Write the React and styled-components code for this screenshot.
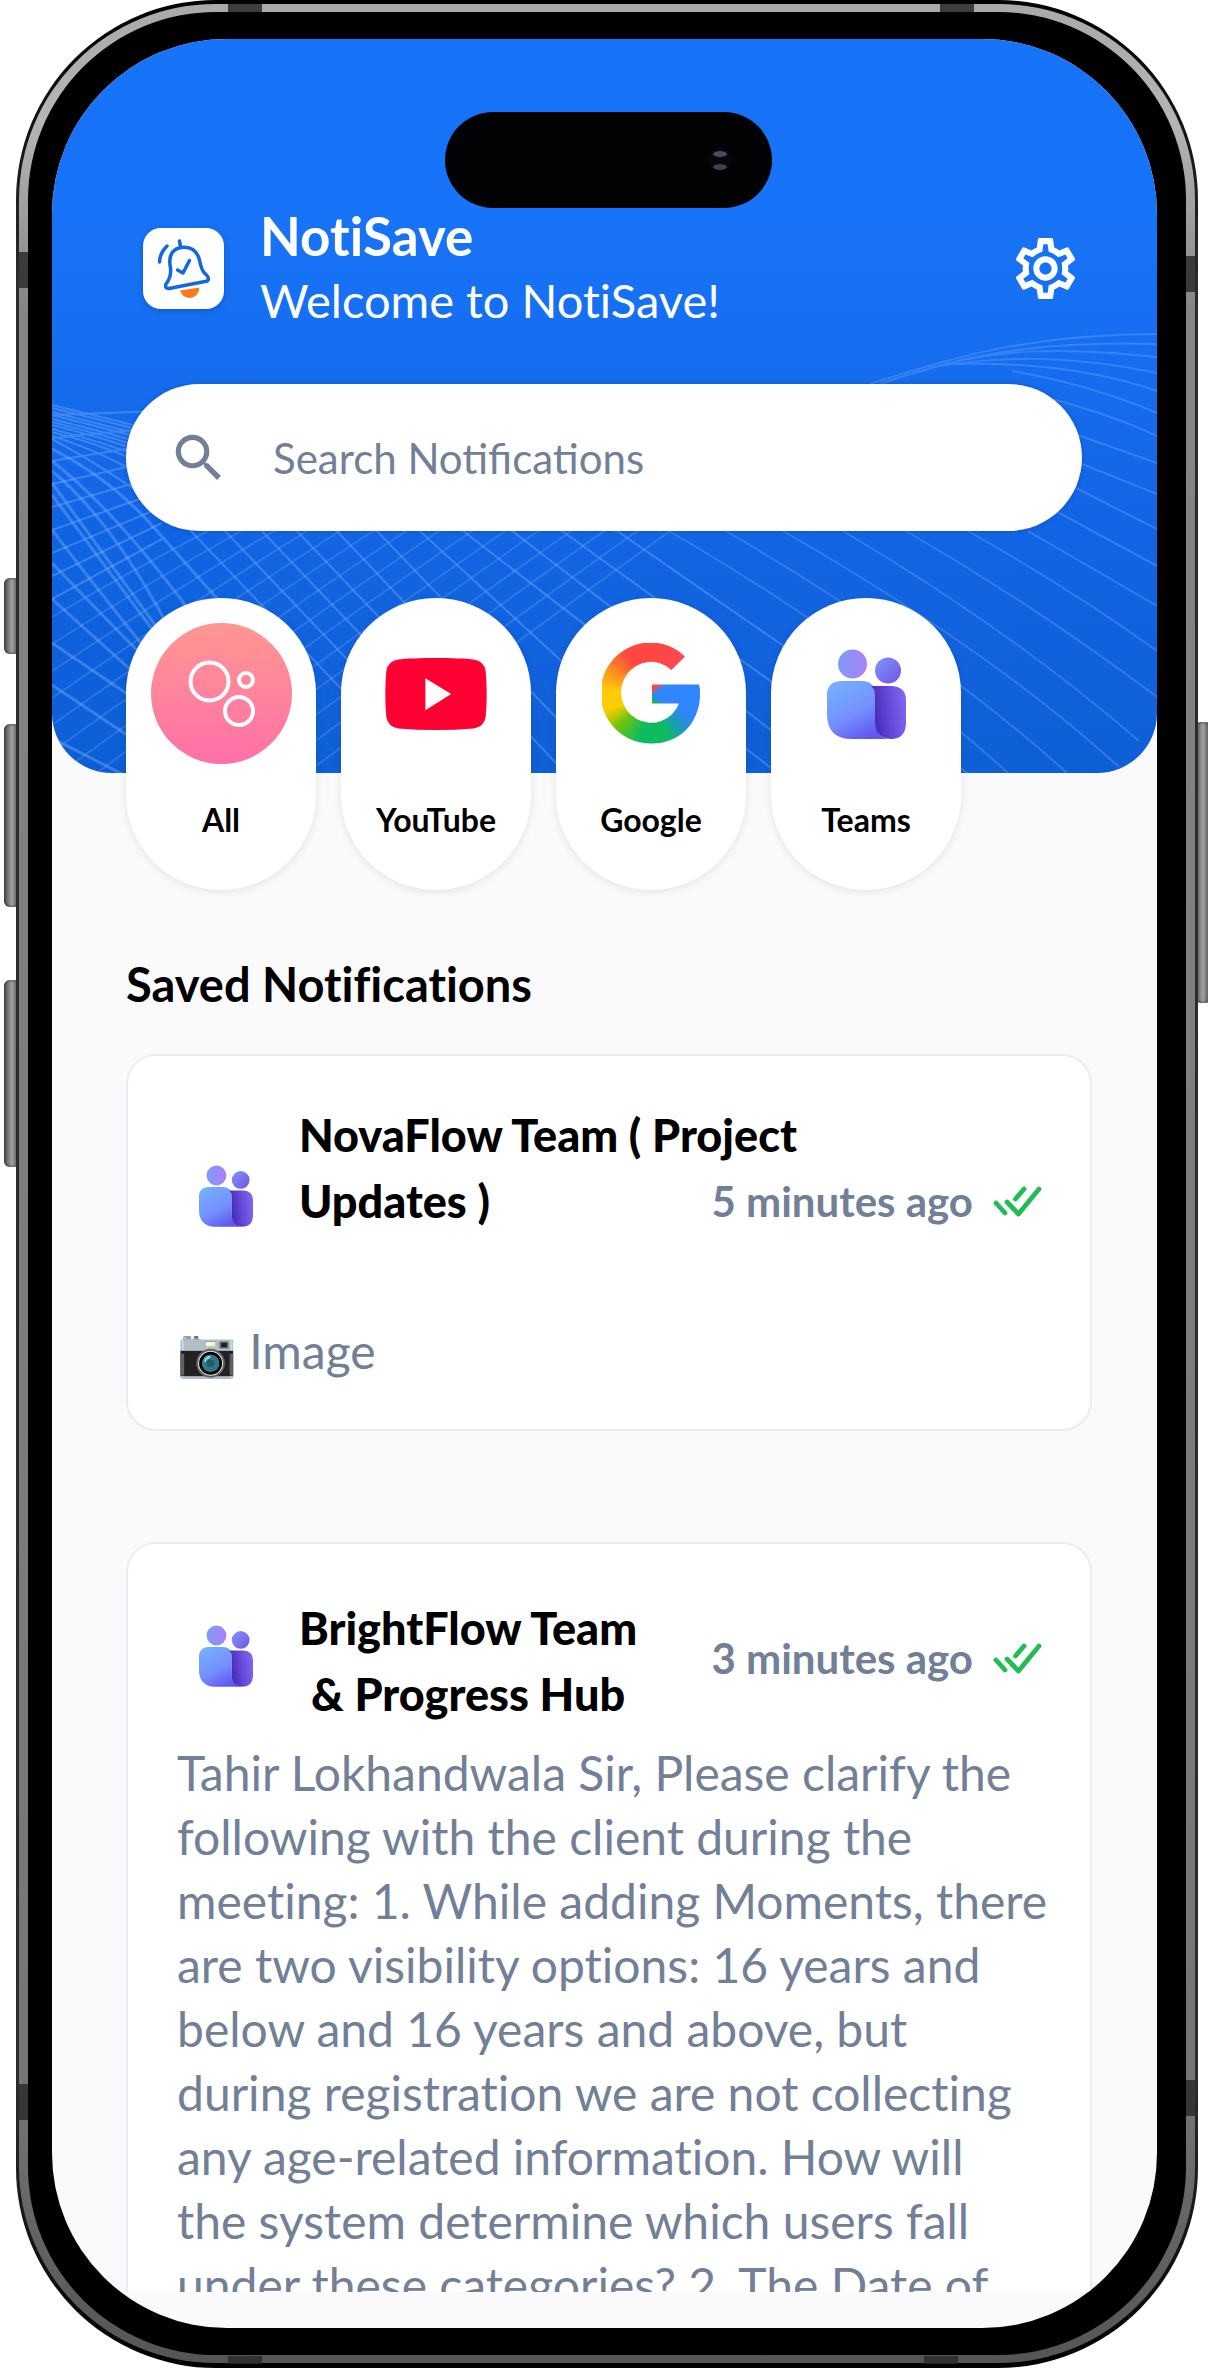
import styled, { createGlobalStyle } from 'styled-components';
import { MdOutlineSettings, MdSearch } from 'react-icons/md';

const GlobalStyle = createGlobalStyle`
    * {
        box-sizing: border-box;
    }
    body {
        margin: 0;
        background: white;
        font-family: Lato, 'Liberation Sans', sans-serif;
        font-variant-ligatures: none;
    }
    h1, h2, h3, p {
        margin: 0;
    }
`;

const Stage = styled.div`
    position: relative;
    height: 100vh;
    padding: 0 10px 0 16px;
`;

const SideButton = styled.span`
    position: absolute;
    top: ${({ $top }) => $top}px;
    height: ${({ $height }) => $height}px;
    width: 16px;
    ${({ $right }) => ($right ? 'right: -3px;' : 'left: 4px;')}
    border-radius: 6px;
    background: linear-gradient(90deg, #4a4a4a, #a2a2a2 50%, #3a3a3a);
    box-shadow: inset 0 0 3px #222;
`;

const Device = styled.div`
    position: relative;
    height: 100%;
    padding: 4px 3px 5px 3px;
    border-radius: 200px;
    background: linear-gradient(#000, #2c2c2c 12%, #2c2c2c 88%, #000);
`;

const Rim = styled.div`
    height: 100%;
    padding: 8px 9px;
    border-radius: 196px;
    background: linear-gradient(#a9a9a9, #b5b5b5 5%, #858585 13%, #757575 88%, #555);
`;

const Bezel = styled.div`
    height: 100%;
    padding: 27px 29px 27px 24px;
    border-radius: 188px;
    background: black;
`;

const Antenna = styled.span`
    position: absolute;
    background: #2b2b2b;
    opacity: 0.85;
    ${({ $side }) =>
        $side === 'top' || $side === 'bottom'
            ? `width: 34px; height: 8px; ${$side}: 4px;`
            : `width: 9px; height: 36px; ${$side}: 3px;`}
    ${({ $from, $at }) => `${$from}: ${$at}px;`}
`;

const Screen = styled.div`
    position: relative;
    display: flex;
    flex-direction: column;
    height: 100%;
    padding-bottom: 36px;
    border-radius: 175px;
    overflow: hidden;
    background: #fafafa;
`;

const Island = styled.div`
    position: absolute;
    top: 73px;
    left: 393px;
    right: 385px;
    display: flex;
    align-items: center;
    justify-content: flex-end;
    height: 96px;
    padding-right: 40px;
    border-radius: 48px;
    background: #020204;
`;

const HeaderBlock = styled.header`
    position: relative;
    flex-shrink: 0;
    padding: 165px 75px 242px 74px;
    border-radius: 0 0 60px 60px;
    overflow: hidden;
    background: linear-gradient(#1674f8, #1772f6 30%, #1264e2 70%, #0f5fd6);
`;

const WaveSvg = styled.svg`
    position: absolute;
    inset: 0;
    width: 100%;
    height: 100%;
`;

const TopBar = styled.div`
    position: relative;
    display: flex;
    align-items: center;
    gap: 36px;
    padding-left: 17px;
    margin-bottom: 52px;
    color: white;
`;

const LogoTile = styled.div`
    width: 81px;
    height: 81px;
    border-radius: 18px;
    background: white;
    box-shadow: 0 2px 6px rgba(0, 40, 120, 0.3);
`;

const Greeting = styled.div`
    flex: 1;
    line-height: 64px;
`;

const AppName = styled.h1`
    font-size: 53px;
    font-weight: 700;
`;

const Welcome = styled.p`
    font-size: 47px;
`;

const IconButton = styled.button`
    display: flex;
    padding: 0;
    border: 0;
    background: none;
    color: white;
    font-size: 73px;
`;

const SearchBar = styled.label`
    position: relative;
    display: flex;
    align-items: center;
    gap: 43px;
    height: 147px;
    padding: 0 42px;
    border-radius: 74px;
    background: white;
    color: #718096;
    font-size: 62px;
    box-shadow: 0 0 4px rgba(0, 30, 110, 0.3);
`;

const SearchInput = styled.input`
    flex: 1;
    min-width: 0;
    padding: 0;
    border: 0;
    outline: none;
    background: none;
    font-family: inherit;
    font-size: 42px;
    color: #718096;

    &::placeholder {
        color: #718096;
        opacity: 1;
    }
`;

const Filters = styled.nav`
    position: relative;
    display: flex;
    flex-shrink: 0;
    gap: 25px;
    margin-top: -175px;
    padding: 0 74px;
`;

const FilterPill = styled.button`
    display: flex;
    flex-direction: column;
    align-items: center;
    gap: 36px;
    width: 190px;
    height: 292px;
    padding: 25px 0 0;
    border: 0;
    border-radius: 95px;
    background: white;
    color: black;
    font-family: inherit;
    font-size: 32px;
    font-weight: 700;
    line-height: 40px;
    box-shadow: 0 2px 8px rgba(0, 0, 0, 0.09);
`;

const FilterIcon = styled.span`
    display: flex;
    align-items: center;
    justify-content: center;
    width: 141px;
    height: 141px;
    border-radius: 50%;
    background: ${({ $background }) => $background || 'none'};
`;

const GoogleMark = styled.span`
    width: 98px;
    height: 102px;
    background: conic-gradient(
        #ff4641 0deg,
        #ff4850 40deg,
        #3086ff 60deg,
        #3086ff 118deg,
        #1a9bb8 140deg,
        #0ebc5f 160deg,
        #0ebc5f 195deg,
        #6cc30f 225deg,
        #ffcc00 250deg,
        #ffcb0a 275deg,
        #ff8a20 303deg,
        #ff4641 330deg
    );
    clip-path: path(
        'M83 14 L69.5 27.5 A30 30.5 0 1 0 77 61 H50 V42 H97 C98 46 98.5 50 98 55 C96 82 77 101 50 101 A50 50.5 0 1 1 83 14 Z'
    );
`;

const Main = styled.main`
    flex: 1;
    min-height: 0;
    padding: 64px 65px 0 74px;
    overflow: hidden;
`;

const SectionTitle = styled.h2`
    margin-bottom: 40px;
    font-size: 47px;
    font-weight: 700;
    line-height: 60px;
`;

const Card = styled.article`
    margin-bottom: 111px;
    padding: 46px 24px 46px 49px;
    border: 2px solid #e9ecf2;
    border-radius: 30px;
    background: white;
`;

const CardHead = styled.div`
    display: grid;
    grid-template-columns: 98px 1fr auto;
    grid-template-rows: ${({ $stacked }) => ($stacked ? '66px 66px' : 'auto')};
    column-gap: 24px;
    align-items: center;
    padding-right: 24px;
    margin: ${({ $stacked }) => ($stacked ? '0 0 85px' : '5px 0 14px')};
`;

const CardIcon = styled.div`
    grid-column: 1;
    grid-row: ${({ $stacked }) => ($stacked ? 2 : 1)};
    display: flex;
    justify-content: center;
    padding-bottom: 10px;
`;

const CardTitle = styled.h3`
    grid-column: ${({ $stacked }) => ($stacked ? '2 / span 2' : '2')};
    grid-row: ${({ $stacked }) => ($stacked ? '1 / span 2' : '1')};
    display: flex;
    flex-direction: column;
    align-items: ${({ $stacked }) => ($stacked ? 'flex-start' : 'center')};
    justify-self: start;
    font-size: 45px;
    font-weight: 900;
    line-height: 66px;
`;

const CardTime = styled.div`
    grid-column: 3;
    grid-row: ${({ $stacked }) => ($stacked ? 2 : 1)};
    display: flex;
    align-items: center;
    gap: 20px;
    padding-bottom: ${({ $stacked }) => ($stacked ? 0 : 6)}px;
    color: #718096;
    font-size: 42px;
    font-weight: 700;
`;

const Message = styled.p`
    color: #718096;
    font-size: 48px;
    line-height: 64px;
    white-space: pre-line;
`;

// long lines that fall to the right, in the header's 1105 x 734 space
const sweeps = [
    [139, 1.05], [173, 1.05], [210, 1.05], [245, 1.05], [285, 1.06], [325, 1.04],
    [368, 0.92], [411, 0.77], [460, 0.77], [510, 0.72], [565, 0.69],
].map(([x, slope], i) => {
    const startY = Math.round(400 - i * 3.4);
    const midX = x / 2;
    const midY = Math.round(Math.max(492 - slope * midX * 0.75, startY + midX * 0.25));
    return `M0 ${startY} Q${midX} ${midY} ${x} 492 L${Math.round(x + 250 / slope)} 742`;
});

const rightSweeps = [
    'M818 345 C900 318 980 295 1105 295',
    'M828 345 C920 312 1000 302 1105 305',
    'M860 335 C940 308 1010 308 1105 318',
    'M880 328 C960 315 1030 318 1105 334',
    'M900 325 C970 323 1040 330 1105 352',
    'M960 332 Q1040 346 1105 374',
    'M1000 360 Q1060 376 1105 397',
    'M1020 394 L1105 424',
    'M1020 421 L1105 455',
    'M1010 442 L1105 490',
    'M1000 470 L1105 527',
    'M976 492 L1105 567',
    'M916 492 Q1020 551 1105 612',
    'M854 492 Q985 568 1105 658',
    'M791 492 Q960 592 1087 702',
    'M731 492 Q940 612 1067 728',
    'M674 492 Q880 612 1015 734',
    'M617 492 Q820 610 956 734',
];

const leftSweeps = [
    'M0 410 Q60 440 105 492 L170 565', 'M0 422 Q62 470 140 575', 'M0 432 Q58 480 112 580',
    'M0 444 L106 590', 'M0 456 L100 590', 'M0 491 Q50 556 92 608',
    'M0 524 Q50 576 90 616', 'M0 560 L80 632', 'M0 604 L90 665', 'M0 646 L90 706', 'M0 699 L74 737',
];

const risers = Array.from({ length: 15 }, (_, k) => {
    const x = 156 + k * 33;
    return `M0 ${578 + k * 27} Q${x / 2} ${532 + k * 13} ${x} 492 L${x + 60} 456`;
});

const leftRisers = Array.from({ length: 9 }, (_, k) => `M0 ${376 + k * 23} L110 ${372 + k * 16}`);

const Waves = () => (
    <WaveSvg viewBox="0 0 1105 734" preserveAspectRatio="none" fill="none" stroke="#8fbcff" aria-hidden="true">
        <g strokeWidth="2" opacity="0.34">
            {sweeps.map((d) => <path key={d} d={d} />)}
            {leftRisers.map((d) => <path key={d} d={d} />)}
        </g>
        <g strokeWidth="3" opacity="0.34">
            {leftSweeps.map((d) => <path key={d} d={d} />)}
        </g>
        <g strokeWidth="2" opacity="0.22">
            {risers.map((d) => <path key={d} d={d} />)}
        </g>
        <g strokeWidth="2" opacity="0.27">
            {rightSweeps.map((d) => <path key={d} d={d} />)}
        </g>
    </WaveSvg>
);

const CameraLens = () => (
    <svg width="24" height="34" viewBox="0 0 24 34" aria-hidden="true">
        <circle cx="12" cy="17" r="12" fill="#06060e" />
        <ellipse cx="12" cy="11" rx="7" ry="3" fill="#4c4c60" />
        <ellipse cx="12" cy="24" rx="7" ry="3" fill="#404054" />
    </svg>
);

const BellLogo = () => (
    <svg width="81" height="81" viewBox="0 0 81 81" fill="none" stroke="#1268e0" strokeLinecap="round" strokeLinejoin="round" aria-hidden="true">
        <path strokeWidth="3.5" d="M36.5 13 L37.5 18.5" />
        <path strokeWidth="3.5" d="M26 60.5 Q21.5 61 23 56 Q28.5 49 27.5 40 Q24 22.5 37.5 19.5 Q52.5 17 56.5 32 Q58.5 43 62.5 46 Q67 50 64.5 53 Z" />
        <path strokeWidth="3.5" d="M34.5 42 L40 45 L46.5 32.5" />
        <path strokeWidth="3.5" d="M16.5 34 Q17 24.5 24 18" />
        <path d="M37 62.5 L56.5 59.5 Q55.5 69 47 70 Q39.5 70 37 62.5 Z" fill="#f97a1c" stroke="none" />
    </svg>
);

const BubblesIcon = () => (
    <svg width="141" height="141" viewBox="0 0 141 141" fill="none" stroke="white" strokeWidth="4" aria-hidden="true">
        <circle cx="58.5" cy="58.5" r="19" />
        <circle cx="95" cy="57" r="7" />
        <circle cx="88" cy="88" r="14" />
    </svg>
);

const YouTubeIcon = () => (
    <svg width="104" height="72" viewBox="0 0 102 71" aria-hidden="true">
        <path
            fill="#ff0033"
            d="M51 0 C66 0 81 .5 88 1.5 Q98.5 3 100 13 Q102 35 100 58 Q98.5 68 88 69.5 Q70 71 51 71 Q32 71 14 69.5 Q3.5 68 2 58 Q0 35 2 13 Q3.5 3 14 1.5 C21 .5 36 0 51 0 Z"
        />
        <path fill="white" d="M40.5 20 L66 35.5 L40.5 51.5 Z" />
    </svg>
);

const TeamsIcon = ({ id, size }) => (
    <svg width={Math.round((size * 79) / 90)} height={size} viewBox="0 0 79 90" aria-hidden="true">
        <defs>
            <linearGradient id={`${id}-head`} x1="0" y1="0.4" x2="1" y2="0.5">
                <stop offset="0" stopColor="#7f9bfb" />
                <stop offset="1" stopColor="#a882f6" />
            </linearGradient>
            <linearGradient id={`${id}-head2`} x1="0" y1="0" x2="1" y2="1">
                <stop offset="0" stopColor="#7f97fb" />
                <stop offset="1" stopColor="#7352e0" />
            </linearGradient>
            <linearGradient id={`${id}-body`} x1="0" y1="0" x2="0.6" y2="1">
                <stop offset="0" stopColor="#74b4ff" />
                <stop offset="0.6" stopColor="#7590ff" />
                <stop offset="1" stopColor="#6157ee" />
            </linearGradient>
            <linearGradient id={`${id}-side`} x1="0" y1="0.6" x2="1" y2="0.4">
                <stop offset="0" stopColor="#3d24ae" />
                <stop offset="0.5" stopColor="#6446d8" />
                <stop offset="1" stopColor="#8264f0" />
            </linearGradient>
        </defs>
        <circle cx="25.5" cy="15" r="14.5" fill={`url(#${id}-head)`} />
        <circle cx="61" cy="21.5" r="13" fill={`url(#${id}-head2)`} />
        <path fill={`url(#${id}-body)`} d="M13 32 H35 Q47 32 48 44 V74 Q50 90 64 90 H23 Q0 89 0 65 V44 Q1 33 13 32 Z" />
        <path fill={`url(#${id}-side)`} d="M44 37 H65 Q79 38 79 51 V75 Q78 90 64 90 Q48 89 48 73 V46 Q48 40 44 37 Z" />
    </svg>
);

const DoubleCheck = () => (
    <svg width="49" height="31" viewBox="0 0 49 31" fill="none" stroke="#22bb55" strokeWidth="4.8" strokeLinecap="round" strokeLinejoin="round" aria-hidden="true">
        <path d="M3 17 L12 27" />
        <path d="M14 16 L25.5 28 L46 3" />
        <path d="M22.5 13 L31 3" />
    </svg>
);

const filters = [
    { label: 'All', icon: <BubblesIcon />, background: 'linear-gradient(#fe9792, #ff70a8)' },
    { label: 'YouTube', icon: <YouTubeIcon /> },
    { label: 'Google', icon: <GoogleMark /> },
    { label: 'Teams', icon: <TeamsIcon id="filter" size={90} /> },
];

const notifications = [
    {
        id: 'nova',
        title: ['NovaFlow Team ( Project', 'Updates )'],
        time: '5 minutes ago',
        message: '📷 Image',
        stacked: true,
    },
    {
        id: 'bright',
        title: ['BrightFlow Team', '& Progress Hub'],
        time: '3 minutes ago',
        message: `Tahir Lokhandwala Sir, Please clarify the
            following with the client during the
            meeting: 1. While adding Moments, there
            are two visibility options: 16 years and
            below and 16 years and above, but
            during registration we are not collecting
            any age-related information. How will
            the system determine which users fall
            under these categories? 2. The Date of`,
    },
];

const Notification = ({ id, title, time, message, stacked }) => (
    <Card>
        <CardHead $stacked={stacked}>
            <CardIcon $stacked={stacked}>
                <TeamsIcon id={id} size={62} />
            </CardIcon>
            <CardTitle $stacked={stacked}>
                {title.map((line) => (
                    <span key={line}>{line}</span>
                ))}
            </CardTitle>
            <CardTime $stacked={stacked}>
                {time}
                <DoubleCheck />
            </CardTime>
        </CardHead>
        <Message>{message}</Message>
    </Card>
);

const App = () => {
    return (
        <>
            <GlobalStyle />
            <Stage>
                <SideButton $top={578} $height={76} />
                <SideButton $top={724} $height={183} />
                <SideButton $top={980} $height={187} />
                <SideButton $top={722} $height={281} $right />
                <Device>
                    <Rim>
                        <Bezel>
                            <Screen>
                                <HeaderBlock>
                                    <Waves />
                                    <TopBar>
                                        <LogoTile>
                                            <BellLogo />
                                        </LogoTile>
                                        <Greeting>
                                            <AppName>NotiSave</AppName>
                                            <Welcome>Welcome to NotiSave!</Welcome>
                                        </Greeting>
                                        <IconButton aria-label="Settings">
                                            <MdOutlineSettings />
                                        </IconButton>
                                    </TopBar>
                                    <SearchBar>
                                        <MdSearch />
                                        <SearchInput type="search" placeholder="Search Notifications" aria-label="Search Notifications" />
                                    </SearchBar>
                                </HeaderBlock>
                                <Filters>
                                    {filters.map(({ label, icon, background }) => (
                                        <FilterPill key={label}>
                                            <FilterIcon $background={background}>{icon}</FilterIcon>
                                            {label}
                                        </FilterPill>
                                    ))}
                                </Filters>
                                <Main>
                                    <SectionTitle>Saved Notifications</SectionTitle>
                                    {notifications.map((item) => (
                                        <Notification key={item.id} {...item} />
                                    ))}
                                </Main>
                                <Island>
                                    <CameraLens />
                                </Island>
                            </Screen>
                        </Bezel>
                    </Rim>
                    <Antenna $side="top" $from="left" $at={212} />
                    <Antenna $side="top" $from="right" $at={224} />
                    <Antenna $side="bottom" $from="left" $at={212} />
                    <Antenna $side="bottom" $from="right" $at={240} />
                    <Antenna $side="left" $from="top" $at={252} />
                    <Antenna $side="right" $from="top" $at={256} />
                    <Antenna $side="left" $from="bottom" $at={248} />
                    <Antenna $side="right" $from="bottom" $at={252} />
                </Device>
            </Stage>
        </>
    );
};

export default App;
